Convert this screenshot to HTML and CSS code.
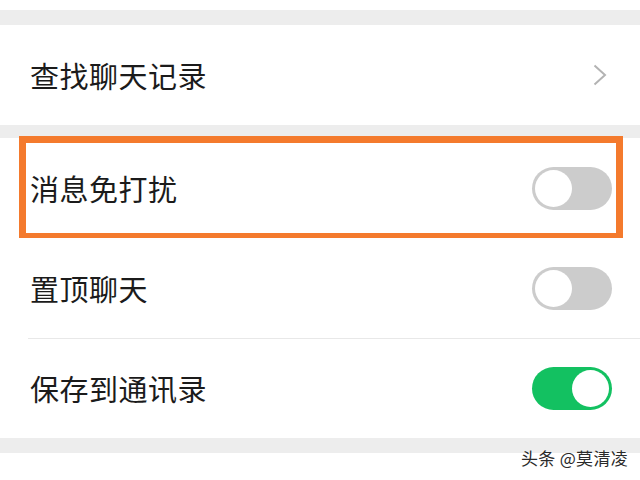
FILE: index.html
```html
<!DOCTYPE html>
<html lang="zh-CN">
<head>
    <meta charset="UTF-8">
    <title>聊天信息</title>
    <link rel="stylesheet" href="styles.css">
</head>
<body>
    <div class="top-white"></div>
    <div class="gap gap-top"></div>

    <div class="row">
        <span class="label">查找聊天记录</span>
        <svg class="chevron" width="14" height="22" viewBox="0 0 14 22">
            <polyline points="1.5,1.5 12,11 1.5,20.5" fill="none" stroke="#b3b3b3" stroke-width="2"/>
        </svg>
    </div>

    <div class="gap gap-mid"></div>

    <div class="row highlighted">
        <span class="label">消息免打扰</span>
        <span class="switch"></span>
    </div>
    <div class="row">
        <span class="label">置顶聊天</span>
        <span class="switch"></span>
    </div>
    <div class="row divided">
        <span class="label">保存到通讯录</span>
        <span class="switch on"></span>
    </div>

    <div class="gap gap-bottom"></div>

    <div class="footer">
        <span class="watermark">头条 @莫清凌</span>
    </div>
</body>
</html>
```

FILE: styles.css
```css
body {
    margin: 0;
    padding: 0;
    background: #fff;
    font-family: "Noto Sans CJK SC", "Noto Sans", sans-serif;
    color: #1b1b1b;
    overflow: hidden;
}
.top-white {
    height: 10px;
}
.gap {
    background: #ededed;
}
.gap-top {
    height: 15px;
}
.gap-mid {
    height: 13px;
}
.gap-bottom {
    height: 15px;
}
.row {
    position: relative;
    height: 100px;
    display: flex;
    align-items: center;
    justify-content: space-between;
    padding: 0 28px 0 30px;
    background: #fff;
}
.row.divided::before {
    content: "";
    position: absolute;
    top: 0;
    left: 28px;
    right: 0;
    border-top: 1px solid #e8e8e8;
}
.row.highlighted::after {
    content: "";
    position: absolute;
    top: -2px;
    bottom: -2px;
    left: 19px;
    right: 17px;
    border: 7px solid #f47a2d;
}
.label {
    font-size: 29px;
    letter-spacing: 0.5px;
    line-height: 1;
}
.chevron {
    margin-right: 5px;
    display: block;
}
.switch {
    position: relative;
    width: 80px;
    height: 43px;
    border-radius: 22px;
    background: #cccccc;
}
.switch::after {
    content: "";
    position: absolute;
    top: 3px;
    left: 3px;
    width: 37px;
    height: 37px;
    border-radius: 50%;
    background: #fff;
}
.switch.on {
    background: #13c161;
}
.switch.on::after {
    left: 40px;
}
/* watermark sits over the bottom of the gray band */
.footer {
    position: relative;
    margin-top: -6px;
    height: 33px;
    display: flex;
    justify-content: flex-end;
    padding-right: 12px;
}
.watermark {
    font-size: 17px;
    line-height: 22px;
    letter-spacing: 0.3px;
    color: #2a2a2a;
    text-shadow: 0 0 2px #fff;
}
```
